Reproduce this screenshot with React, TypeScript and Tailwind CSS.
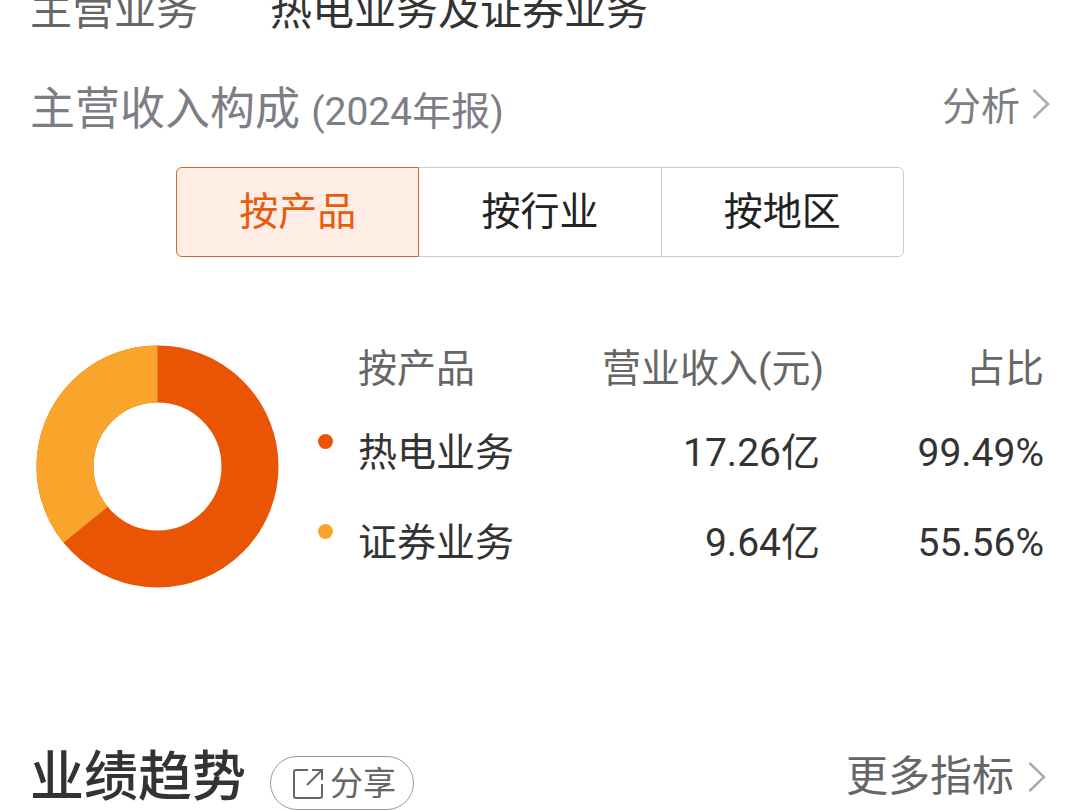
import { useState } from "react";
import clsx from "clsx";

const tabs = ["按产品", "按行业", "按地区"];

const rows = [
  { name: "热电业务", income: "17.26亿", ratio: "99.49%", dot: "bg-[#e95504]" },
  { name: "证券业务", income: "9.64亿", ratio: "55.56%", dot: "bg-[#f9a52b]" },
];

function Chevron({ className }: { className?: string }) {
  return (
    <svg className={className} width="18" height="32" viewBox="0 0 18 32" fill="none" stroke="#aaaaaa" strokeWidth="2.5">
      <path d="M1.5 2L16 16L1.5 30" />
    </svg>
  );
}

function ShareIcon() {
  return (
    <svg width="32" height="32" viewBox="0 0 32 32" fill="none" stroke="#666666" strokeWidth="2">
      <path d="M16 2H4Q2 2 2 4V28Q2 30 4 30H28Q30 30 30 28V16" />
      <path d="M20 2H30V12M30 2L15 17" />
    </svg>
  );
}

function Donut() {
  return (
    <svg width="243" height="243" viewBox="-121.5 -121.5 243 243" role="img" aria-label="主营收入构成">
      <circle r="92.5" fill="none" stroke="#e95504" strokeWidth="57" />
      {/* 9.64 of 26.90 */}
      <circle
        r="92.5"
        fill="none"
        stroke="#f9a52b"
        strokeWidth="57"
        pathLength="100"
        strokeDasharray="35.84 64.16"
        transform="rotate(141)"
      />
    </svg>
  );
}

export default function App() {
  const [active, setActive] = useState(0);

  return (
    <main className="overflow-hidden bg-white px-[30px] font-[Roboto,'Noto_Sans_CJK_SC',sans-serif] text-[#333333]">
      <dl className="flex text-[42px] leading-[22px]">
        <dt className="w-60 text-[#666666]">主营业务</dt>
        <dd>热电业务及证券业务</dd>
      </dl>

      <section>
        <div className="mt-[59px] flex h-[60px] items-center justify-between text-[#7d7d85]">
          <h2 className="text-[45px] leading-[60px]">
            主营收入构成 <span className="text-[39px]">(2024年报)</span>
          </h2>
          <a href="#" className="flex items-center gap-3 pb-2 text-[39px] leading-[52px]">
            分析
            <Chevron className="mb-1.5" />
          </a>
        </div>

        <div className="mx-auto mt-[26px] flex w-[728px] max-w-full text-[39px]">
          {tabs.map((tab, i) => (
            <button
              key={tab}
              type="button"
              onClick={() => setActive(i)}
              className={clsx(
                "-ml-px h-[90px] flex-1 border first:ml-0 first:rounded-l-md last:rounded-r-md",
                i === active
                  ? "z-10 border-[#d0692e] bg-[#feede5] text-[#e85a0c]"
                  : "border-[#cccccc] text-[#222222]"
              )}
            >
              {tab}
            </button>
          ))}
        </div>

        <div className="mt-[82px] flex items-start pl-1.5">
          <div className="mt-1.5 shrink-0">
            <Donut />
          </div>
          <table className="ml-[39px] flex-1 text-[39px] leading-[60px]">
            <thead className="text-[#666666]">
              <tr className="h-[69px] align-top">
                <th className="w-10"></th>
                <th className="text-left font-normal">按产品</th>
                <th className="text-right font-normal">营业收入(元)</th>
                <th className="w-[226px] pr-1.5 text-right font-normal">占比</th>
              </tr>
            </thead>
            <tbody>
              {rows.map((row) => (
                <tr key={row.name} className="h-[90px]">
                  <td>
                    <span className={clsx("mb-6 block size-[15px] rounded-full", row.dot)}></span>
                  </td>
                  <td>{row.name}</td>
                  <td className="pr-1 text-right">{row.income}</td>
                  <td className="pr-1.5 text-right">{row.ratio}</td>
                </tr>
              ))}
            </tbody>
          </table>
        </div>
      </section>

      <section className="mt-[156px] flex items-end justify-between">
        <div className="flex items-end gap-6">
          <h2 className="text-[54px] leading-[64px] font-medium">业绩趋势</h2>
          <button
            type="button"
            className="flex h-[54px] w-36 items-center justify-center gap-1.5 rounded-full border border-[#999999] pt-0.5 pl-1 text-[33px] text-[#666666]"
          >
            <ShareIcon />
            分享
          </button>
        </div>
        <a href="#" className="flex items-center gap-3.5 pr-1 text-[42px] leading-[66px] text-[#666666]">
          更多指标
          <Chevron />
        </a>
      </section>
    </main>
  );
}
